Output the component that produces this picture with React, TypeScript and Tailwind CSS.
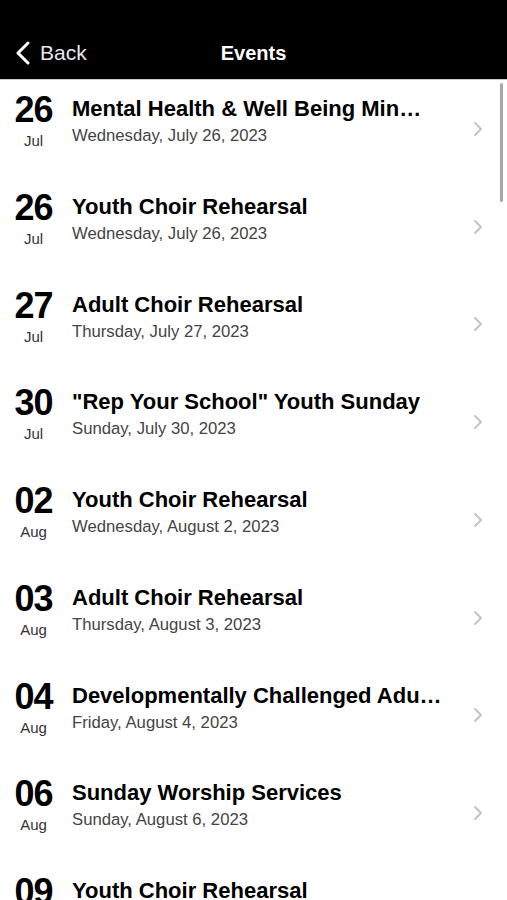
import React from 'react';

const events = [
  { day: '26', month: 'Jul', title: 'Mental Health & Well Being Min\u2026', date: 'Wednesday, July 26, 2023' },
  { day: '26', month: 'Jul', title: 'Youth Choir Rehearsal', date: 'Wednesday, July 26, 2023' },
  { day: '27', month: 'Jul', title: 'Adult Choir Rehearsal', date: 'Thursday, July 27, 2023' },
  { day: '30', month: 'Jul', title: '"Rep Your School" Youth Sunday', date: 'Sunday, July 30, 2023' },
  { day: '02', month: 'Aug', title: 'Youth Choir Rehearsal', date: 'Wednesday, August 2, 2023' },
  { day: '03', month: 'Aug', title: 'Adult Choir Rehearsal', date: 'Thursday, August 3, 2023' },
  { day: '04', month: 'Aug', title: 'Developmentally Challenged Adu\u2026', date: 'Friday, August 4, 2023' },
  { day: '06', month: 'Aug', title: 'Sunday Worship Services', date: 'Sunday, August 6, 2023' },
  { day: '09', month: 'Aug', title: 'Youth Choir Rehearsal', date: 'Wednesday, August 9, 2023' },
];

const App: React.FC = () => {
  return (
    <div className="w-[507px] h-[900px] overflow-hidden bg-white flex flex-col" style={{ fontFamily: '"Liberation Sans", Arial, sans-serif' }}>
      {/* nav bar */}
      <div className="h-[80px] shrink-0 bg-black border-b border-[#c8c8c8] flex items-end pb-[14px] relative">
        <div className="flex items-center pl-[15px] text-white">
          <svg width="16" height="24" viewBox="0 0 16 24" fill="none" stroke="currentColor" strokeWidth={3} strokeLinecap="round" strokeLinejoin="round">
            <path d="M13 2L3 12l10 10" />
          </svg>
          <span className="ml-[9px] text-[21px] leading-[24px] text-[#e8e8e8]">Back</span>
        </div>
        <div className="absolute left-0 right-0 bottom-[14px] text-center text-white text-[20px] leading-[24px] font-bold pointer-events-none">
          Events
        </div>
      </div>

      {/* list */}
      <div className="relative flex-1 overflow-hidden">
        <div className="absolute right-[4px] top-[3px] w-[3px] h-[119px] rounded-full bg-[#a8a8a8]" />
        {events.map((e, i) => (
          <div key={i} className="h-[97.75px] flex items-start pt-[12px]">
            <div className="w-[67px] shrink-0 flex flex-col items-center">
              <div className="text-[36px] leading-[36px] font-bold text-black tracking-[-1px]">{e.day}</div>
              <div className="mt-[5px] text-[15px] leading-[15px] text-[#333]">{e.month}</div>
            </div>
            <div className="flex-1 min-w-0 pt-[5px] pl-[5px]">
              <div className="text-[22px] leading-[24px] font-bold text-black whitespace-nowrap">{e.title}</div>
              <div className="mt-[5px] text-[16.7px] leading-[20px] text-[#444]">{e.date}</div>
            </div>
            <div className="self-stretch flex items-center pr-[24px] -mt-[12px]">
              <svg width="10" height="16" viewBox="0 0 10 16" fill="none" stroke="#c4c4c8" strokeWidth={2} strokeLinecap="round" strokeLinejoin="round">
                <path d="M2 2l6 6-6 6" />
              </svg>
            </div>
          </div>
        ))}
      </div>
    </div>
  );
};

export default App;
